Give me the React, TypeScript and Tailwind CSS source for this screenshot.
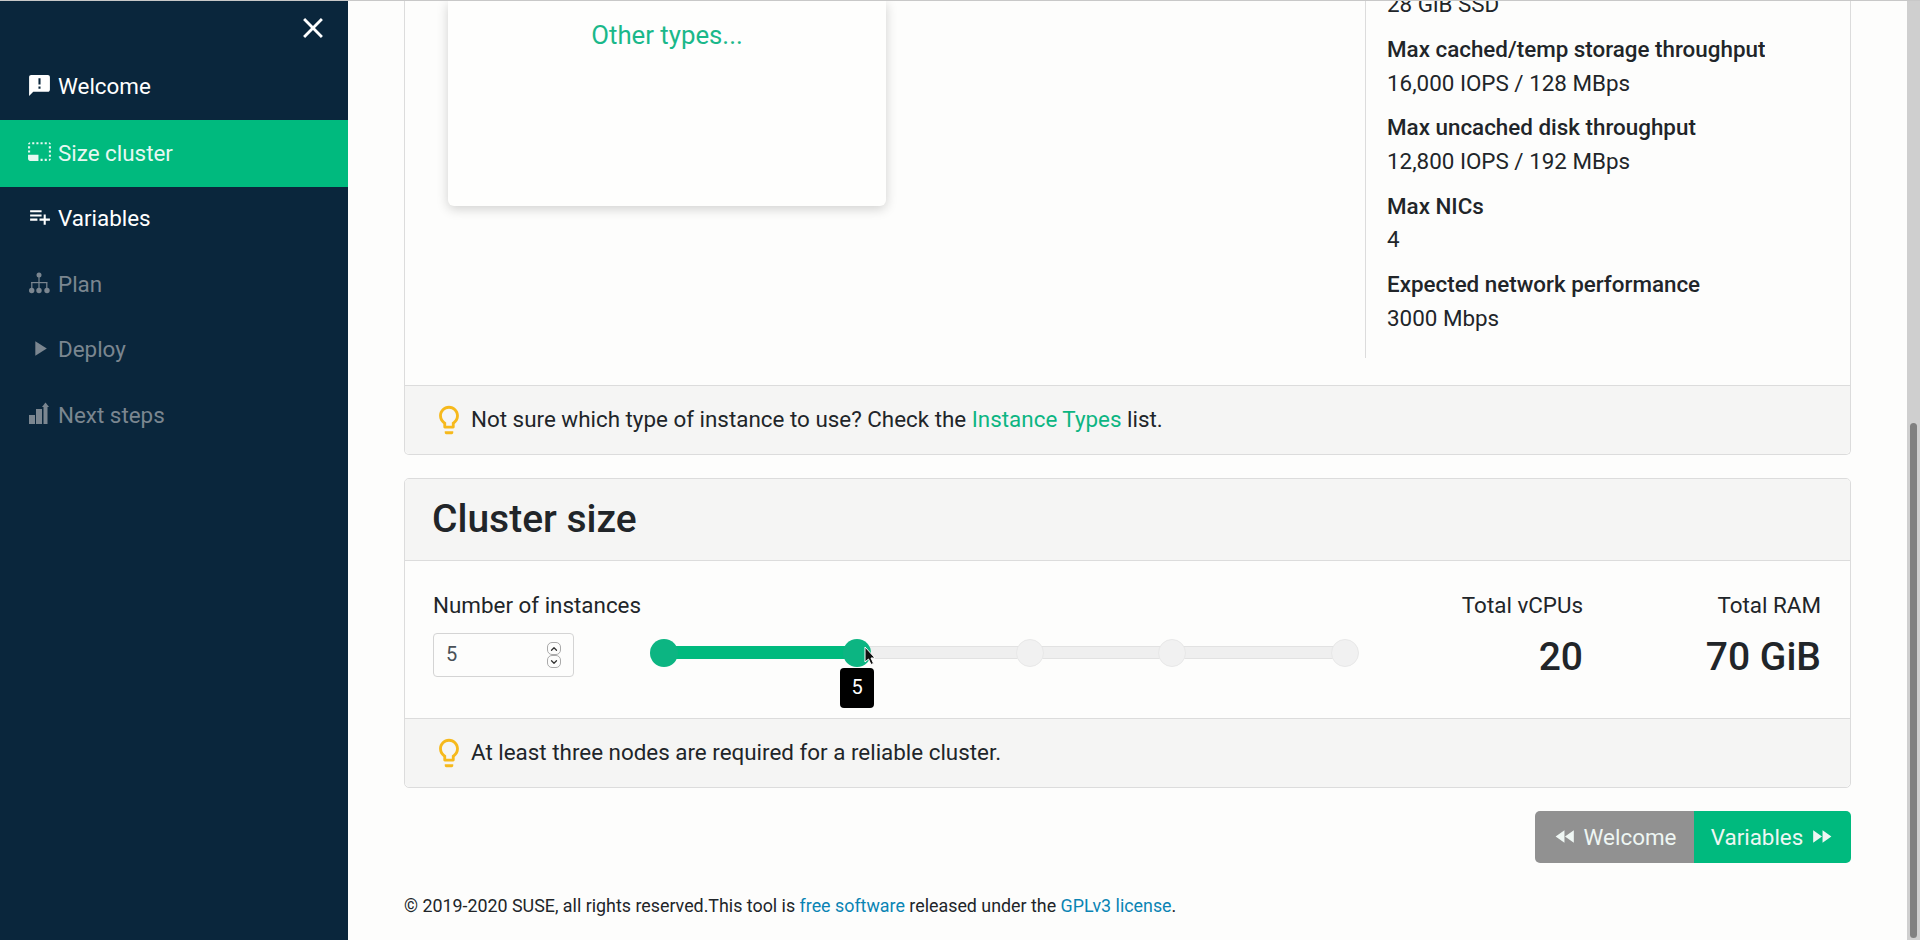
import { ChevronDown, ChevronUp } from 'lucide-react';
import { MdAnnouncement, MdClose, MdFastForward, MdFastRewind, MdLightbulbOutline, MdPhotoSizeSelectSmall, MdPlayArrow, MdPlaylistAdd } from 'react-icons/md';

function PlanIcon({ className }: { className?: string }) {
  return (
    <svg viewBox="0 0 25 25" className={className} fill="currentColor">
      <circle cx="12" cy="5" r="2.5" />
      <rect x="11.4" y="6" width="1.2" height="12" />
      <rect x="4.2" y="12" width="16" height="1.2" />
      <rect x="4.2" y="12" width="1.2" height="6" />
      <rect x="19.2" y="12" width="1.2" height="6" />
      <circle cx="4.7" cy="20.5" r="2.7" />
      <circle cx="12" cy="20.5" r="2.7" />
      <circle cx="20" cy="20.5" r="2.7" />
    </svg>
  );
}

function StepsIcon({ className }: { className?: string }) {
  return (
    <svg viewBox="0 0 25 25" className={className} fill="currentColor">
      <rect x="2" y="14" width="6" height="9" />
      <rect x="9" y="8" width="6" height="15" />
      <rect x="16.5" y="5" width="4" height="18" />
      <path d="M18.5 1.5 L22 6 L15 6 Z" />
    </svg>
  );
}

const navItems = [
  { label: 'Welcome', icon: MdAnnouncement, state: 'done' },
  { label: 'Size cluster', icon: MdPhotoSizeSelectSmall, state: 'active' },
  { label: 'Variables', icon: MdPlaylistAdd, state: 'done' },
  { label: 'Plan', icon: PlanIcon, state: 'off' },
  { label: 'Deploy', icon: MdPlayArrow, state: 'off' },
  { label: 'Next steps', icon: StepsIcon, state: 'off' },
];

const specs = [
  ['Max cached/temp storage throughput', '16,000 IOPS / 128 MBps'],
  ['Max uncached disk throughput', '12,800 IOPS / 192 MBps'],
  ['Max NICs', '4'],
  ['Expected network performance', '3000 Mbps'],
];

function Sidebar() {
  return (
    <aside className="w-[348px] shrink-0 bg-[#0a263c] text-[22.4px]">
      <div className="h-[52px] flex justify-end items-start pt-[10px] pr-[18px]">
        <MdClose className="w-[34px] h-[34px] text-white" />
      </div>
      <nav className="pt-[1.3px]">
        {navItems.map((item) => {
          const Icon = item.icon;
          return (
            <div
              key={item.label}
              className={
                item.state === 'active'
                  ? 'h-[67px] -mb-[1px] relative flex items-center pl-[27px] gap-[6px] bg-[#00ba7e] text-[#e6f8f2]'
                  : item.state === 'done'
                    ? 'h-[65.7px] flex items-center pl-[27px] gap-[6px] text-white'
                    : 'h-[65.7px] flex items-center pl-[27px] gap-[6px] text-[#7b8690]'
              }
            >
              <Icon className="w-[25px] h-[25px] -mt-[4px]" />
              <span>{item.label}</span>
            </div>
          );
        })}
      </nav>
    </aside>
  );
}

function Hint({ children }: { children: React.ReactNode }) {
  return (
    <div className="h-[69px] flex items-center bg-[#f5f5f4] border-t border-[#dcdcdc] pl-[27px] rounded-b-[5px]">
      <MdLightbulbOutline className="w-[34px] h-[34px] text-[#f6b91c] mr-[5px] shrink-0" />
      <span>{children}</span>
    </div>
  );
}

function Handle({ left, on }: { left: string; on?: boolean }) {
  return (
    <div
      className={
        on
          ? 'absolute top-[-8px] w-[28px] h-[28px] -ml-[14px] rounded-full bg-[#0cb582]'
          : 'absolute top-[-8px] w-[28px] h-[28px] -ml-[14px] rounded-full bg-[#f1f1f1] border border-[#e8e8e8]'
      }
      style={{ left }}
    />
  );
}

function ClusterSize() {
  return (
    <section className="mt-[23px] border border-[#dcdcdc] rounded-[5px] overflow-hidden">
      <h2 className="h-[82px] flex items-center bg-[#f5f5f4] border-b border-[#dcdcdc] pl-[27px] text-[39px] font-medium text-[#212529]">
        Cluster size
      </h2>
      <div className="h-[157px] flex pl-[28px] pr-[29px]">
        <div className="w-[201px] pt-[28px]">
          <div className="leading-[33px] whitespace-nowrap">Number of instances</div>
          <div className="relative mt-[11px] w-[141px] h-[44px] border border-[#d4d4d4] rounded-[4px] flex items-center pl-[12px] text-[#495057] text-[20px]">
            5
            <div className="absolute right-[12px] top-[8px] flex flex-col text-[#333]">
              <span className="w-[14px] h-[13px] border border-[#aaa] rounded-[5px] flex items-center justify-center">
                <ChevronUp className="w-[10px] h-[10px]" strokeWidth={3} />
              </span>
              <span className="w-[14px] h-[13px] border border-[#aaa] rounded-[5px] flex items-center justify-center">
                <ChevronDown className="w-[10px] h-[10px]" strokeWidth={3} />
              </span>
            </div>
          </div>
        </div>
        <div className="ml-[30px] w-[681px] pt-[85px]">
          <div className="relative h-[13px] bg-[#efefef] border-y border-[#e2e2e2] rounded-full">
            <div className="absolute left-0 top-[-1px] h-[13px] w-[193px] bg-[#00ba7e]" />
            <Handle left="0px" on />
            <Handle left="193px" on />
            <Handle left="366px" />
            <Handle left="508px" />
            <Handle left="681px" />
            <div className="absolute left-[176px] top-[21px] w-[34px] h-[40px] bg-black text-white rounded-[4px] flex items-center justify-center text-[20px]">5</div>
            <svg viewBox="0 0 12 20" className="absolute left-[200px] top-[-1px] w-[12px] h-[20px]">
              <path d="M1 1 L1 16 L4.5 13 L7 18.5 L9.5 17.4 L7 12 L11 12 Z" fill="#111" stroke="#fff" strokeWidth="1" />
            </svg>
          </div>
        </div>
        <div className="flex-1 flex justify-end pt-[28px] text-right">
          <div className="w-[200px]">
            <div className="leading-[33px]">Total vCPUs</div>
            <div className="text-[39px] font-medium text-[#212529] leading-[44px] mt-[13px]">20</div>
          </div>
          <div className="w-[238px]">
            <div className="leading-[33px]">Total RAM</div>
            <div className="text-[39px] font-medium text-[#212529] leading-[44px] mt-[13px]">70 GiB</div>
          </div>
        </div>
      </div>
      <Hint>At least three nodes are required for a reliable cluster.</Hint>
    </section>
  );
}

export default function App() {
  return (
    <div className="h-[940px] overflow-hidden flex flex-col bg-[#fdfdfc] text-[22.4px] leading-[33.6px] text-[#212529] font-['Roboto',sans-serif]">
      <div className="h-px bg-[#c8c8c8] shrink-0" />
      <div className="flex flex-1 min-h-0">
        <Sidebar />
        <main className="flex-1 min-w-0 overflow-hidden pl-[56px] pr-[56px]">
          {/* Instance type card, scrolled past its top */}
          <section className="border-x border-b border-[#dcdcdc] rounded-b-[5px]">
            <div className="h-[384px] flex pl-[43px] pr-[20px]">
              <div className="w-[438px] h-[205px] bg-[#fefefd] rounded-b-[6px] shadow-[0_3px_12px_rgba(0,0,0,0.18)] text-center pt-[18px]">
                <span className="text-[25.76px] text-[#1ab88a]">Other types...</span>
              </div>
              <div className="ml-[479px] h-[357px] border-l border-[#dcdcdc] pl-[21px] overflow-hidden">
                <div className="-mt-[13px] mb-[11.5px]">28 GiB SSD</div>
                {specs.map(([name, value]) => (
                  <div key={name} className="mb-[11.2px]">
                    <div className="font-medium">{name}</div>
                    <div>{value}</div>
                  </div>
                ))}
              </div>
            </div>
            <Hint>
              Not sure which type of instance to use? Check the <span className="text-[#0cb582]">Instance Types</span> list.
            </Hint>
          </section>
          <ClusterSize />
          <div className="mt-[23px] flex justify-end">
            <div className="flex rounded-[5px] overflow-hidden h-[52px] text-[#eef6f3]">
              <div className="w-[159px] pt-[1px] bg-[#919191] flex items-center justify-center gap-[6px]">
                <MdFastRewind className="w-[25px] h-[25px] -mt-[3px]" />
                Welcome
              </div>
              <div className="w-[157px] pt-[1px] bg-[#00ba7e] flex items-center justify-center gap-[6px]">
                Variables
                <MdFastForward className="w-[25px] h-[25px] -mt-[3px]" />
              </div>
            </div>
          </div>
          <p className="mt-[27px] text-[17.85px] leading-[32px]">
            © 2019-2020 SUSE, all rights reserved.This tool is <span className="text-[#0a84b4]">free software</span> released under the <span className="text-[#0a84b4]">GPLv3 license</span>.
          </p>
        </main>
        <div className="w-[13px] shrink-0 bg-[#cfcfcf] flex flex-col justify-end pb-[2px] pr-[1px] items-center">
          <div className="w-[7px] h-[515px] bg-[#808080] rounded-full" />
        </div>
      </div>
    </div>
  );
}
